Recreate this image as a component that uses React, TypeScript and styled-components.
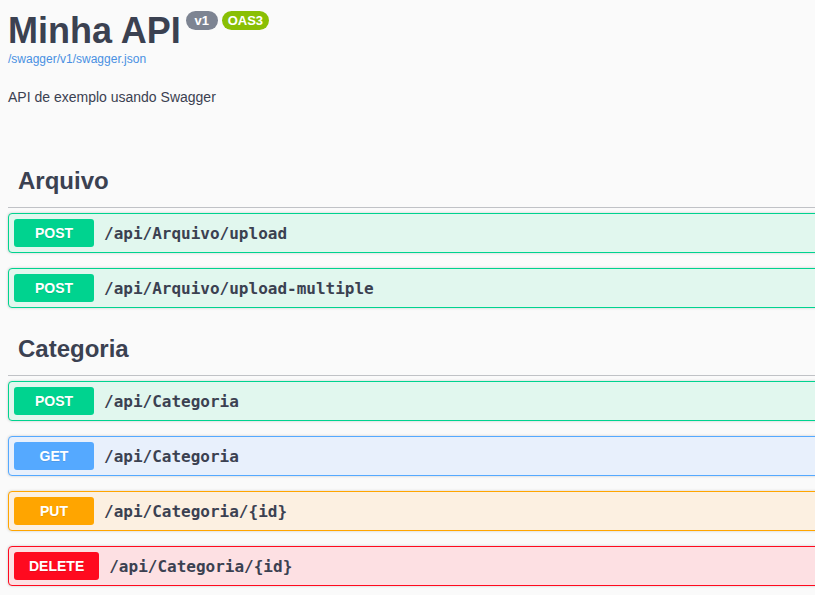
import React from "react";
import styled, { createGlobalStyle } from "styled-components";

const Global = createGlobalStyle`
  html, body { margin: 0; padding: 0; background: #fafafa; overflow: hidden; }
  body { font-family: "Liberation Sans", Arial, sans-serif; color: #3b4151; }
`;

type Method = "POST" | "GET" | "PUT" | "DELETE";

const palette: Record<Method, { main: string; bg: string }> = {
  POST: { main: "#00d38f", bg: "#e1f7ee" },
  GET: { main: "#55a9ff", bg: "#e8f0fc" },
  PUT: { main: "#ffa500", bg: "#fcf0e1" },
  DELETE: { main: "#ff0a1f", bg: "#fde0e3" },
};

const Page = styled.div`
  width: 1200px;
  padding: 10px 8px 0;
  box-sizing: border-box;
`;

const Info = styled.div`
  display: flex;
  flex-direction: column;
  align-items: flex-start;
`;

const Title = styled.h2`
  margin: 0;
  font-size: 36px;
  line-height: 41px;
  font-weight: 700;
  color: #3b4151;
  display: flex;
  align-items: flex-start;
`;

const Badge = styled.span<{ $bg: string }>`
  display: inline-block;
  box-sizing: border-box;
  min-width: 32px;
  text-align: center;
  background: ${(p) => p.$bg};
  color: #fff;
  font-size: 13px;
  line-height: 15px;
  font-weight: 700;
  padding: 2px 6px;
  border-radius: 57px;
  margin: 1px 0 0 4px;
  &:first-of-type { margin-left: 5px; }
`;

const SpecLink = styled.a`
  display: block;
  font-size: 12px;
  line-height: 14px;
  color: #4990e2;
  text-decoration: none;
  margin-top: 1px;
`;

const Description = styled.p`
  margin: 23px 0 50px;
  font-size: 14px;
  line-height: 16px;
  color: #3b4151;
`;

const TagSection = styled.section`
  display: flex;
  flex-direction: column;
`;

const TagHeading = styled.h3`
  margin: 0 0 5px;
  padding: 10px 0 10px 10px;
  font-size: 24px;
  line-height: 32px;
  font-weight: 700;
  color: #3b4151;
  border-bottom: 1px solid rgba(59, 65, 81, 0.3);
`;

const OpBlock = styled.div<{ $method: Method }>`
  margin: 0 0 15px;
  border: 1px solid ${(p) => palette[p.$method].main};
  background: ${(p) => palette[p.$method].bg};
  border-radius: 4px;
  box-shadow: 0 0 3px rgba(0, 0, 0, 0.19);
  padding: 5px;
  display: flex;
  align-items: center;
`;

const MethodTag = styled.span<{ $method: Method }>`
  min-width: 80px;
  box-sizing: border-box;
  padding: 6px 15px;
  border-radius: 3px;
  background: ${(p) => palette[p.$method].main};
  color: #fff;
  font-family: "Liberation Sans", Arial, sans-serif;
  font-size: 14px;
  line-height: 16px;
  font-weight: 700;
  text-align: center;
  text-shadow: 0 1px 0 rgba(0, 0, 0, 0.1);
`;

const Path = styled.span`
  padding: 0 10px;
  font-family: "DejaVu Sans Mono", "Liberation Mono", monospace;
  font-size: 16px;
  font-weight: 700;
  color: #3b4151;
`;

const tags: { name: string; ops: { method: Method; path: string }[] }[] = [
  {
    name: "Arquivo",
    ops: [
      { method: "POST", path: "/api/Arquivo/upload" },
      { method: "POST", path: "/api/Arquivo/upload-multiple" },
    ],
  },
  {
    name: "Categoria",
    ops: [
      { method: "POST", path: "/api/Categoria" },
      { method: "GET", path: "/api/Categoria" },
      { method: "PUT", path: "/api/Categoria/{id}" },
      { method: "DELETE", path: "/api/Categoria/{id}" },
    ],
  },
];

export default function App() {
  return (
    <>
      <Global />
      <Page>
        <Info>
          <Title>
            Minha API
            <Badge $bg="#7d8492">v1</Badge>
            <Badge $bg="#89bf04">OAS3</Badge>
          </Title>
          <SpecLink href="#">/swagger/v1/swagger.json</SpecLink>
        </Info>
        <Description>API de exemplo usando Swagger</Description>
        {tags.map((t) => (
          <TagSection key={t.name}>
            <TagHeading>{t.name}</TagHeading>
            {t.ops.map((o, i) => (
              <OpBlock key={i} $method={o.method}>
                <MethodTag $method={o.method}>{o.method}</MethodTag>
                <Path>{o.path}</Path>
              </OpBlock>
            ))}
          </TagSection>
        ))}
      </Page>
    </>
  );
}
